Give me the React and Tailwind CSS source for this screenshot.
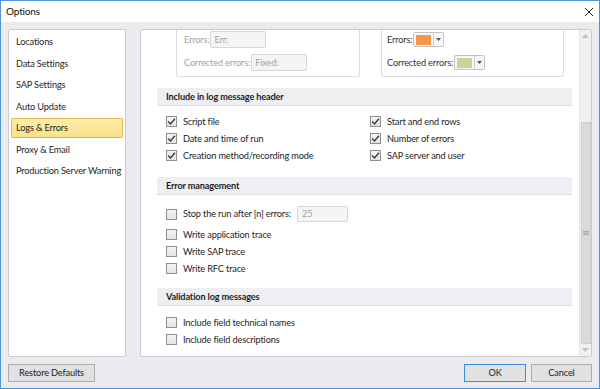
import React from 'react';

const navItems = [
  'Locations',
  'Data Settings',
  'SAP Settings',
  'Auto Update',
  'Logs & Errors',
  'Proxy & Email',
  'Production Server Warning',
];

const Check = ({ checked }) => (
  <span className="w-[11px] h-[11px] border border-[#8e8f8f] bg-gradient-to-b from-[#f4f4f4] to-[#e4e4e4] flex items-center justify-center shrink-0">
    {checked && (
      <svg width="9" height="9" viewBox="0 0 9 9">
        <path d="M1.2 4.6 L3.5 6.9 L7.9 1.8" fill="none" stroke="#2e3a55" strokeWidth="1.4" />
      </svg>
    )}
  </span>
);

const CheckRow = ({ checked, label }) => (
  <div className="h-[17px] flex items-center gap-[6px] whitespace-nowrap">
    <Check checked={checked} />
    <span>{label}</span>
  </div>
);

const SectionHeader = ({ title }) => (
  <div className="ml-[16px] mr-[7px] h-[18px] bg-[#eeeff2] border-b border-[#dfe1e5] flex items-center pl-[9px] font-bold">
    {title}
  </div>
);

const Swatch = ({ color }) => (
  <div className="h-[15px] flex border border-[#c3c3c3] bg-[#f7f7f7] rounded-[2px]">
    <div className="px-[2px] flex items-center border-r border-[#d0d0d0]">
      <div className={`w-[15px] h-[10px] ${color}`} />
    </div>
    <div className="w-[9px] flex items-center justify-center">
      <svg width="5" height="3" viewBox="0 0 5 3">
        <path d="M0 0 L5 0 L2.5 3 Z" fill="#555" />
      </svg>
    </div>
  </div>
);

const App = () => {
  return (
    <div
      className="w-[600px] h-[389px] border border-[#4a95dc] bg-[#e9ebee] flex flex-col text-[9.2px] tracking-[-0.15px] text-[#1e1e1e] overflow-hidden whitespace-nowrap"
      style={{ fontFamily: 'Lato, "Noto Sans", sans-serif' }}
    >
      <div className="h-[21px] bg-white flex items-center justify-between pl-[5px] pr-[5px] shrink-0 text-[10px] text-[#111]">
        <span>Options</span>
        <svg width="10" height="10" viewBox="0 0 10 10">
          <path d="M1 1 L9 9 M9 1 L1 9" stroke="#222" strokeWidth="1" />
        </svg>
      </div>

      <div className="flex-1 flex flex-col px-[7px] pt-[7px] pb-[6px]">
        <div className="h-[328px] flex gap-[14px]">
          <div className="w-[118px] bg-white border border-[#c9cbcf] rounded-[2px] pt-[1.5px] px-[2px]">
            {navItems.map((item) =>
              item === 'Logs & Errors' ? (
                <div
                  key={item}
                  className="h-[20px] my-[0.75px] flex items-center pl-[4px] border border-[#e3b54f] bg-gradient-to-b from-[#fdecaa] to-[#fbe28a] rounded-[1px]"
                >
                  {item}
                </div>
              ) : (
                <div key={item} className="h-[21.5px] flex items-center pl-[5px]">
                  {item}
                </div>
              )
            )}
          </div>

          <div className="flex-1 bg-white border border-[#c9cbcf] rounded-[2px] flex overflow-hidden">
            <div className="flex-1 flex flex-col">
              <div className="flex gap-[21px] pl-[35px] mr-[15px]">
                <div className="w-[184px] h-[47px] border-x border-b border-[#dcdde0] rounded-b-[3px] pl-[7px] pt-[1px] flex flex-col gap-[6px] text-[#a3a3a3]">
                  <div className="h-[17px] flex items-center gap-[1px]">
                    <span>Errors:</span>
                    <div className="w-[56px] h-[17px] border border-[#d5d5d5] bg-[#f5f5f5] rounded-[2px] pl-[3px] flex items-center">Err:</div>
                  </div>
                  <div className="h-[17px] flex items-center gap-[1px]">
                    <span>Corrected errors:</span>
                    <div className="w-[56px] h-[17px] border border-[#d5d5d5] bg-[#f5f5f5] rounded-[2px] pl-[3px] flex items-center">Fixed:</div>
                  </div>
                </div>
                <div className="flex-1 h-[47px] border-x border-b border-[#dcdde0] rounded-b-[3px] pl-[5px] pt-[1px] flex flex-col gap-[6px] text-[#333]">
                  <div className="h-[17px] flex items-center gap-[1px]">
                    <span>Errors:</span>
                    <Swatch color="bg-[#f79646]" />
                  </div>
                  <div className="h-[17px] flex items-center gap-[1px]">
                    <span>Corrected errors:</span>
                    <Swatch color="bg-[#c3d69b]" />
                  </div>
                </div>
              </div>

              <div className="mt-[11px]">
                <SectionHeader title="Include in log message header" />
                <div className="pl-[25px] pt-[7px] grid grid-cols-[204px_1fr]">
                  <CheckRow checked label="Script file" />
                  <CheckRow checked label="Start and end rows" />
                  <CheckRow checked label="Date and time of run" />
                  <CheckRow checked label="Number of errors" />
                  <CheckRow checked label="Creation method/recording mode" />
                  <CheckRow checked label="SAP server and user" />
                </div>
              </div>

              <div className="mt-[13px]">
                <SectionHeader title="Error management" />
                <div className="pl-[25px] pt-[10px] flex flex-col">
                  <div className="h-[18px] flex items-center gap-[6px] mb-[3px]">
                    <Check />
                    <span className="w-[108px]">Stop the run after [n] errors:</span>
                    <div className="w-[51px] h-[16px] border border-[#d5d5d5] bg-[#f5f5f5] rounded-[2px] pl-[4px] flex items-center text-[#a3a3a3]">25</div>
                  </div>
                  <CheckRow label="Write application trace" />
                  <CheckRow label="Write SAP trace" />
                  <CheckRow label="Write RFC trace" />
                </div>
              </div>

              <div className="mt-[11px]">
                <SectionHeader title="Validation log messages" />
                <div className="pl-[25px] pt-[8px] flex flex-col">
                  <CheckRow label="Include field  technical names" />
                  <CheckRow label="Include field descriptions" />
                </div>
              </div>
            </div>

            <div className="w-[12px] bg-[#f0f0f0] border-l border-[#e6e6e6] flex flex-col items-center">
              <div className="h-[12px] flex items-center justify-center">
                <svg width="7" height="4" viewBox="0 0 7 4">
                  <path d="M0 4 L7 4 L3.5 0 Z" fill="#c2c2c2" />
                </svg>
              </div>
              <div className="h-[80px]" />
              <div className="w-[10px] flex-1 bg-[#dadada] border border-[#cfcfcf] flex items-center justify-center">
                <svg width="6" height="4" viewBox="0 0 6 4">
                  <path d="M0 0.5 H6 M0 2 H6 M0 3.5 H6" stroke="#9a9a9a" strokeWidth="0.8" />
                </svg>
              </div>
              <div className="h-[12px] flex items-center justify-center">
                <svg width="7" height="4" viewBox="0 0 7 4">
                  <path d="M0 0 L7 0 L3.5 4 Z" fill="#c2c2c2" />
                </svg>
              </div>
            </div>
          </div>
        </div>

        <div className="mt-[7px] flex items-center">
          <button className="w-[87px] h-[18px] bg-[#e1e1e1] border border-[#adadad] flex items-center justify-center">
            Restore Defaults
          </button>
          <div className="flex-1" />
          <button className="w-[62px] h-[18px] bg-[#e1e1e1] border border-[#3c8ddc] flex items-center justify-center">
            OK
          </button>
          <button className="ml-[5px] w-[61px] h-[18px] bg-[#e1e1e1] border border-[#adadad] flex items-center justify-center">
            Cancel
          </button>
        </div>
      </div>
    </div>
  );
};

export default App;
